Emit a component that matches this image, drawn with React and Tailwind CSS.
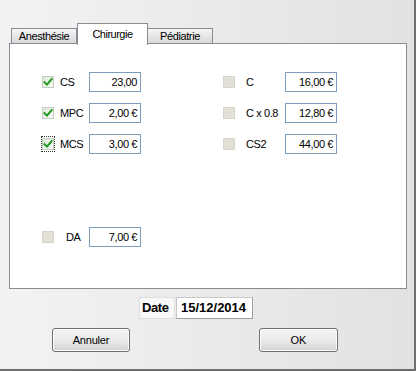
import React from "react";

const font = "font-['Liberation_Sans',Arial,sans-serif]";

function Check({ checked, focus }) {
  const box = checked ? (
    <div className="w-[12px] h-[12px] border border-[#c3cfc0] bg-linear-to-br from-[#dfe9dc] to-[#f7faf6] flex items-center justify-center">
      <svg width="10" height="10" viewBox="0 0 10 10">
        <path d="M1.5 5.2 L4 7.6 L8.6 2.2" fill="none" stroke="#1d9a1d" strokeWidth="2" strokeLinecap="square" />
      </svg>
    </div>
  ) : (
    <div className="w-[12px] h-[12px] border border-[#d8d5cb] bg-[#e3e1d7]" />
  );
  if (focus) {
    return (
      <div className="w-[12px] h-[12px] relative">
        {box}
        <div className="absolute -left-[1px] -top-[2px] w-[14px] h-[16px] border border-dotted border-[#333]" />
      </div>
    );
  }
  return box;
}

function Field({ value, w = "w-[52px]" }) {
  return (
    <div className={`${w} h-[20px] border border-[#7c9dbd] bg-white flex items-center justify-end pr-[3px] text-[11px] tracking-[-0.4px] text-black`}>
      {value}
    </div>
  );
}

function Row({ checked, focus, label, value, labelCls }) {
  return (
    <div className="flex items-center h-[20px]">
      <Check checked={checked} focus={focus} />
      <div className={`${labelCls} text-[11px] tracking-[-0.4px] text-black`}>{label}</div>
      <Field value={value} />
    </div>
  );
}

export default function App() {
  return (
    <div className={`w-[416px] h-[371px] ${font} bg-linear-to-r from-[#f3f3f3] to-[#e2e2e2] border-r-2 border-b-2 border-[#6e6e6e] flex flex-col pt-[23px] pl-[9px]`}>
      {/* tabs */}
      <div className="flex items-end h-[20px] pl-[2px] relative z-10">
        <div className="w-[66px] h-[15px] border border-b-0 border-[#898c95] bg-linear-to-b from-[#f5f5f5] to-[#d9d9d9] flex items-center justify-center text-[11px] tracking-[-0.4px] text-black leading-[14px]">
          Anesthésie
        </div>
        <div className="w-[71px] h-[22px] -mb-[2px] border border-b-0 border-[#898c95] bg-white flex items-start justify-center pt-[3px] text-[11px] tracking-[-0.5px] text-black leading-[14px]">
          Chirurgie
        </div>
        <div className="w-[65px] h-[15px] border border-b-0 border-l-0 border-[#898c95] bg-linear-to-b from-[#f5f5f5] to-[#d9d9d9] flex items-center justify-center text-[11px] tracking-[-0.4px] text-black leading-[14px]">
          Pédiatrie
        </div>
      </div>

      {/* panel */}
      <div className="w-[398px] h-[246px] border border-[#898c95] bg-white flex pt-[28px] pl-[32px]">
        <div className="w-[181px] flex flex-col">
          <Row checked label="CS" value="23,00" labelCls="ml-[6px] w-[29px]" />
          <div className="mt-[11px]">
            <Row checked label="MPC" value="2,00 €" labelCls="ml-[6px] w-[29px]" />
          </div>
          <div className="mt-[11px]">
            <Row checked focus label="MCS" value="3,00 €" labelCls="ml-[6px] w-[29px]" />
          </div>
          <div className="mt-[73px]">
            <Row label="DA" value="7,00 €" labelCls="ml-[12px] w-[23px]" />
          </div>
        </div>
        <div className="flex flex-col">
          <Row label="C" value="16,00 €" labelCls="ml-[11px] w-[39px]" />
          <div className="mt-[11px]">
            <Row label="C x 0.8" value="12,80 €" labelCls="ml-[11px] w-[39px]" />
          </div>
          <div className="mt-[11px]">
            <Row label="CS2" value="44,00 €" labelCls="ml-[11px] w-[39px]" />
          </div>
        </div>
      </div>

      {/* date */}
      <div className="mt-[8px] flex ml-[130px] gap-[1px]">
        <div className="w-[36px] h-[22px] bg-[#f8f8f8] border border-[#e0e0e0] flex items-center pl-[2px] text-[13px] font-bold tracking-[-0.4px] text-black">
          Date
        </div>
        <div className="w-[77px] h-[22px] bg-white border border-[#c8c8c8] border-r-[#a0a0a0] border-b-[#a0a0a0] flex items-center pl-[4px] text-[13px] font-bold text-black">
          15/12/2014
        </div>
      </div>

      {/* buttons */}
      <div className="mt-[9px] flex">
        <div className="ml-[43px] w-[78px] h-[24px] rounded-[3px] border border-[#707070] bg-linear-to-b from-[#f4f4f4] via-[#ebebeb] to-[#d2d2d2] shadow-[inset_0_0_0_1px_#fbfbfb] flex items-center justify-center text-[11px] tracking-[-0.2px] text-black">
          Annuler
        </div>
        <div className="ml-[129px] w-[79px] h-[24px] rounded-[3px] border border-[#707070] bg-linear-to-b from-[#f4f4f4] via-[#ebebeb] to-[#d2d2d2] shadow-[inset_0_0_0_1px_#fbfbfb] flex items-center justify-center text-[11px] text-black">
          OK
        </div>
      </div>
    </div>
  );
}
